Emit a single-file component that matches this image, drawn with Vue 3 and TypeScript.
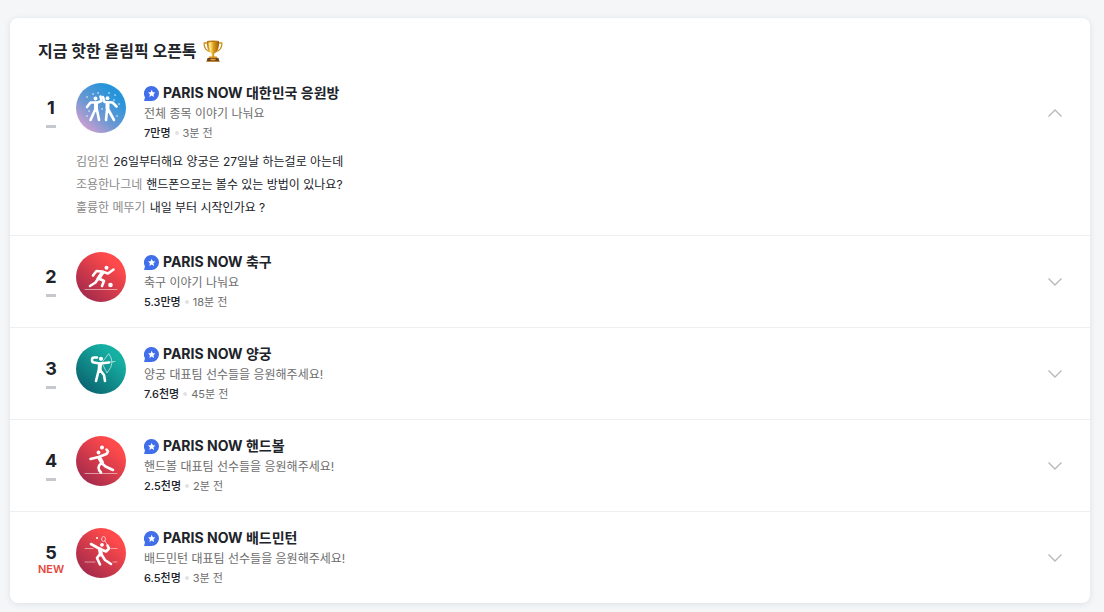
<script setup lang="ts">
import { ref } from 'vue'

type Sport = 'cheer' | 'football' | 'archery' | 'handball' | 'badminton'

interface Message {
  author: string
  text: string
}

interface Room {
  rank: number
  isNew?: boolean
  sport: Sport
  title: string
  description: string
  members: string
  updated: string
  messages: Message[]
}

const rooms: Room[] = [
  {
    rank: 1,
    sport: 'cheer',
    title: 'PARIS NOW 대한민국 응원방',
    description: '전체 종목 이야기 나눠요',
    members: '7만명',
    updated: '3분 전',
    messages: [
      { author: '김임진', text: '26일부터해요 양궁은 27일날 하는걸로 아는데' },
      { author: '조용한나그네', text: '핸드폰으로는 볼수 있는 방법이 있나요?' },
      { author: '훌륭한 메뚜기', text: '내일 부터 시작인가요 ?' },
    ],
  },
  { rank: 2, sport: 'football', title: 'PARIS NOW 축구', description: '축구 이야기 나눠요', members: '5.3만명', updated: '18분 전', messages: [] },
  { rank: 3, sport: 'archery', title: 'PARIS NOW 양궁', description: '양궁 대표팀 선수들을 응원해주세요!', members: '7.6천명', updated: '45분 전', messages: [] },
  { rank: 4, sport: 'handball', title: 'PARIS NOW 핸드볼', description: '핸드볼 대표팀 선수들을 응원해주세요!', members: '2.5천명', updated: '2분 전', messages: [] },
  { rank: 5, isNew: true, sport: 'badminton', title: 'PARIS NOW 배드민턴', description: '배드민턴 대표팀 선수들을 응원해주세요!', members: '6.5천명', updated: '3분 전', messages: [] },
]

const openRank = ref<number | null>(1)

function toggle(rank: number) {
  openRank.value = openRank.value === rank ? null : rank
}
</script>

<template>
  <main class="page">
    <section class="card" aria-labelledby="hot-title">
      <h2 id="hot-title" class="heading">
        <span>지금 핫한 올림픽 오픈톡</span>
        <svg class="trophy" viewBox="0 0 20 22" aria-hidden="true">
          <defs>
            <linearGradient id="gold" x1="0" x2="1">
              <stop offset="0" stop-color="#a96c0d" />
              <stop offset=".3" stop-color="#ffe071" />
              <stop offset=".55" stop-color="#dc9a1b" />
              <stop offset=".8" stop-color="#b97910" />
              <stop offset="1" stop-color="#8f5907" />
            </linearGradient>
          </defs>
          <path d="M5 3H1.200c-.3 3.800 1.500 7.300 5.800 8.600M15 3h3.800c.3 3.800-1.500 7.300-5.800 8.600" fill="none" stroke="#cf9220" stroke-width="1.300" />
          <path d="M4 1h12c.3 6-1 10.500-4.300 12.200-.8.5-.8 2 .1 3.800H8.200c.9-1.800.9-3.300.1-3.800C5 11.500 3.700 7 4 1z" fill="url(#gold)" />
          <ellipse cx="10" cy="1.300" rx="6" ry=".8" fill="#b77812" />
          <path d="M6.200 3c.1 3 .8 5.500 1.800 7.200" fill="none" stroke="#fff0a0" stroke-width="1" />
          <path d="M6 16.500h8l.6 2H5.400z" fill="#d5961f" />
          <path d="M4.500 18h11l.9 3.500H3.600z" fill="#71401c" />
          <path d="M7.500 18.800h5v1.500h-5z" fill="#e3a83a" />
          <path d="M3.300 21h13.400v.8H3.300z" fill="#c58324" />
        </svg>
      </h2>

      <ol class="rooms">
        <li v-for="room in rooms" :key="room.rank" class="room">
          <div class="summary">
            <div class="rank">
              <strong class="rank-number">{{ room.rank }}</strong>
              <span v-if="room.isNew" class="rank-new">NEW</span>
              <span v-else class="rank-same"></span>
            </div>

            <a href="#" class="link">
              <svg class="avatar" viewBox="0 0 50 50" aria-hidden="true">
                <defs>
                  <linearGradient :id="'bg-' + room.sport" x1=".15" y1=".9" x2=".75" y2=".2">
                    <template v-if="room.sport === 'cheer'">
                      <stop offset="0" stop-color="#cf9fd0" />
                      <stop offset=".45" stop-color="#6d98d3" />
                      <stop offset="1" stop-color="#2594da" />
                    </template>
                    <template v-else-if="room.sport === 'archery'">
                      <stop offset="0" stop-color="#0b6470" />
                      <stop offset="1" stop-color="#16b0a3" />
                    </template>
                    <template v-else>
                      <stop offset="0" stop-color="#a32a4b" />
                      <stop offset="1" stop-color="#ff4a4b" />
                    </template>
                  </linearGradient>
                </defs>
                <circle cx="25" cy="25" r="25" :fill="`url(#bg-${room.sport})`" />

                <g v-if="room.sport === 'cheer'" class="figure">
                  <path d="M11 24l3.500-4.500h7l4-1.500-1-4.500" />
                  <path d="M27 14l1.500 5 8 .5 4 4" />
                  <path class="torso" d="M20 20.500v5M31.500 20.500v5" />
                  <path d="M19 27l-4.500 10M21 27l2 10M31 27l-1 10M32.500 27l5.500 10" />
                  <circle class="solid" cx="19.500" cy="15.500" r="1.900" />
                  <circle class="solid" cx="31.500" cy="15.200" r="1.900" />
                  <path class="dots" d="M11 14h.1M17 11h.1M22 10h.1M33 10h.1M39 12h.1M38 17h.1M43 21h.1M26 26h.1M11 33h.1M41 33h.1M13 28h.1" />
                </g>
                <g v-else-if="room.sport === 'football'" class="figure">
                  <path d="M17 23.500l3.500-4.500 5.500.5 6 2 5.500-4" />
                  <path class="torso" d="M26.500 20.500l-4 6" />
                  <path d="M22.500 26l-3 4.500-5.500 3.500M23 26.500l5 2.500-2 5" />
                  <circle class="solid" cx="30.500" cy="15.800" r="2" />
                  <circle class="solid" cx="34.500" cy="33" r="2.300" />
                  <path class="floor" d="M9 37.500h32" />
                </g>
                <g v-else-if="room.sport === 'archery'" class="figure">
                  <path d="M21 13.500h-3q-2 0-2 2.500t2 2.500L24 19.500l9-1" />
                  <path class="torso" d="M24 20.500l-.5 6.500" />
                  <path d="M22.500 27L20 37M24.500 26.500l3.500 4.500 1 6" />
                  <circle class="solid" cx="25" cy="14.800" r="2.100" />
                  <path class="thin" d="M33 10q3 4 3 8.500T31 29L26 19zM26 19l13-1.500" />
                </g>
                <g v-else-if="room.sport === 'handball'" class="figure">
                  <path d="M14.500 23l8-2 8-3 1.500-2.500-1.500-2" />
                  <path class="torso" d="M23.500 22l2.500 4.500" />
                  <path d="M25.500 27l4 3.500 7.500 3.500M25 27.500q-5 4 0 9" />
                  <circle class="solid" cx="22.500" cy="16.500" r="1.900" />
                  <circle class="solid" cx="26" cy="11.500" r="2" />
                  <path class="floor" d="M9 37.500h32" />
                </g>
                <g v-else class="figure">
                  <path class="net" d="M9 20.500h8M35 20.500h6M9 34h10M37 34h4" />
                  <path d="M15 16l8 4.500 7 3 3-3-1.500-3" />
                  <path class="torso" d="M24 21.500l1 5" />
                  <path d="M25.500 26.500l3.500 5.500 6 4M24 26l-3 4 3 6.500" />
                  <circle class="solid" cx="26" cy="16.800" r="1.900" />
                  <circle class="solid" cx="21" cy="10" r="1" />
                  <path class="thin" d="M31.500 17l-2.500-4M25.500 11a2 2.500 0 1 0 4 0a2 2.500 0 1 0-4 0" />
                </g>
              </svg>

              <span class="info">
                <span class="title">
                  <svg class="badge" viewBox="0 0 15 15" aria-hidden="true">
                    <path d="M7.500 0a7.500 7.500 0 1 1 0 15H.8Q0 15 .2 14.200L1 11.300A7.500 7.500 0 0 1 7.500 0z" fill="#416fea" />
                    <path d="M7.700 3.800l1.100 2.400 2.600.3-1.900 1.800.5 2.600-2.300-1.300-2.300 1.300.5-2.600L4 6.500l2.600-.3z" fill="#fff" />
                  </svg>
                  <span>{{ room.title }}</span>
                </span>
                <span class="description">{{ room.description }}</span>
                <span class="meta">
                  <span class="members">{{ room.members }}</span>
                  <span class="dot"></span>
                  <span>{{ room.updated }}</span>
                </span>
              </span>
            </a>

            <button
              type="button"
              class="toggle"
              :aria-expanded="openRank === room.rank"
              :aria-label="openRank === room.rank ? '접기' : '펼치기'"
              @click="toggle(room.rank)"
            >
              <svg class="chevron" viewBox="0 0 14 8" aria-hidden="true">
                <path :d="openRank === room.rank ? 'M.5 7.500L7 1l6.500 6.500' : 'M.5.500L7 7 13.500.500'" />
              </svg>
            </button>
          </div>

          <ul v-if="openRank === room.rank && room.messages.length" class="messages">
            <li v-for="message in room.messages" :key="message.author" class="message">
              <span class="author">{{ message.author }}</span>
              <span>{{ message.text }}</span>
            </li>
          </ul>
        </li>
      </ol>
    </section>
  </main>
</template>

<style>
body {
  background: #f4f6f8;
}
</style>

<style scoped>
.page {
  padding: 18px 14px 9px 10px;
  font-family: Inter, "Noto Sans CJK KR", sans-serif;
  color: #202329;
}

.card {
  border-radius: 8px;
  background: #fff;
  box-shadow: 0 1px 6px rgba(30, 45, 65, 0.1);
}

.heading {
  display: flex;
  align-items: center;
  gap: 6px;
  margin: 0;
  padding: 21px 28px 4px;
  font-size: 16px;
  font-weight: 700;
  line-height: 24px;
}

.trophy {
  width: 20px;
  height: 22px;
}

.rooms,
.messages {
  margin: 0;
  padding: 0;
  list-style: none;
}

.room {
  padding: 16px 28px 15px;
}

.room + .room {
  border-top: 1px solid #eceef0;
}

.summary {
  display: flex;
  align-items: center;
}

.rank {
  display: flex;
  flex: none;
  flex-direction: column;
  align-items: center;
  align-self: flex-start;
  width: 26px;
  padding-top: 14px;
  margin-right: 12px;
}

.rank-number {
  font-size: 18px;
  font-weight: 700;
  line-height: 22px;
}

.rank-same {
  width: 10px;
  height: 3px;
  margin-top: 6px;
  background: #c5c8cc;
}

.rank-new {
  color: #e5483d;
  font-size: 11px;
  font-weight: 600;
  line-height: 10px;
}

.link {
  display: flex;
  flex: 1;
  min-width: 0;
  min-height: 60px;
  color: inherit;
  text-decoration: none;
}

.avatar {
  flex: none;
  width: 50px;
  height: 50px;
  margin-right: 18px;
}

.figure path {
  fill: none;
  stroke: #fff;
  stroke-width: 2.6;
  stroke-linejoin: round;
  stroke-linecap: round;
}

.figure .torso {
  stroke-width: 4;
}

.figure .solid {
  fill: #fff;
}

.figure .dots {
  stroke-width: 1.4;
}

.figure .thin {
  stroke-width: 1;
  opacity: 0.6;
}

.figure .floor,
.figure .net {
  stroke-width: 1;
  opacity: 0.5;
}

.info {
  display: flex;
  flex-direction: column;
  min-width: 0;
}

.title {
  display: flex;
  align-items: center;
  gap: 4px;
  font-size: 14px;
  font-weight: 700;
  line-height: 20px;
}

.badge {
  width: 15px;
  height: 15px;
}

.description {
  color: #6d6d6d;
  font-size: 12px;
  line-height: 22px;
}

.meta {
  display: flex;
  align-items: center;
  gap: 4px;
  color: #6d6d6d;
  font-size: 11px;
  line-height: 16px;
}

.members {
  color: #202329;
  font-weight: 500;
}

.dot {
  width: 4px;
  height: 4px;
  border-radius: 50%;
  background: #e0e2e5;
}

.toggle {
  display: flex;
  flex: none;
  padding: 8px 0;
  border: 0;
  background: none;
  cursor: pointer;
}

.chevron {
  width: 14px;
  height: 8px;
}

.chevron path {
  fill: none;
  stroke: #b9b9b9;
  stroke-width: 1.4;
}

.messages {
  padding: 7px 0 1px 38px;
}

.message {
  display: flex;
  gap: 4px;
  font-size: 12px;
  line-height: 23px;
}

.author {
  color: #8a8a8a;
}
</style>
